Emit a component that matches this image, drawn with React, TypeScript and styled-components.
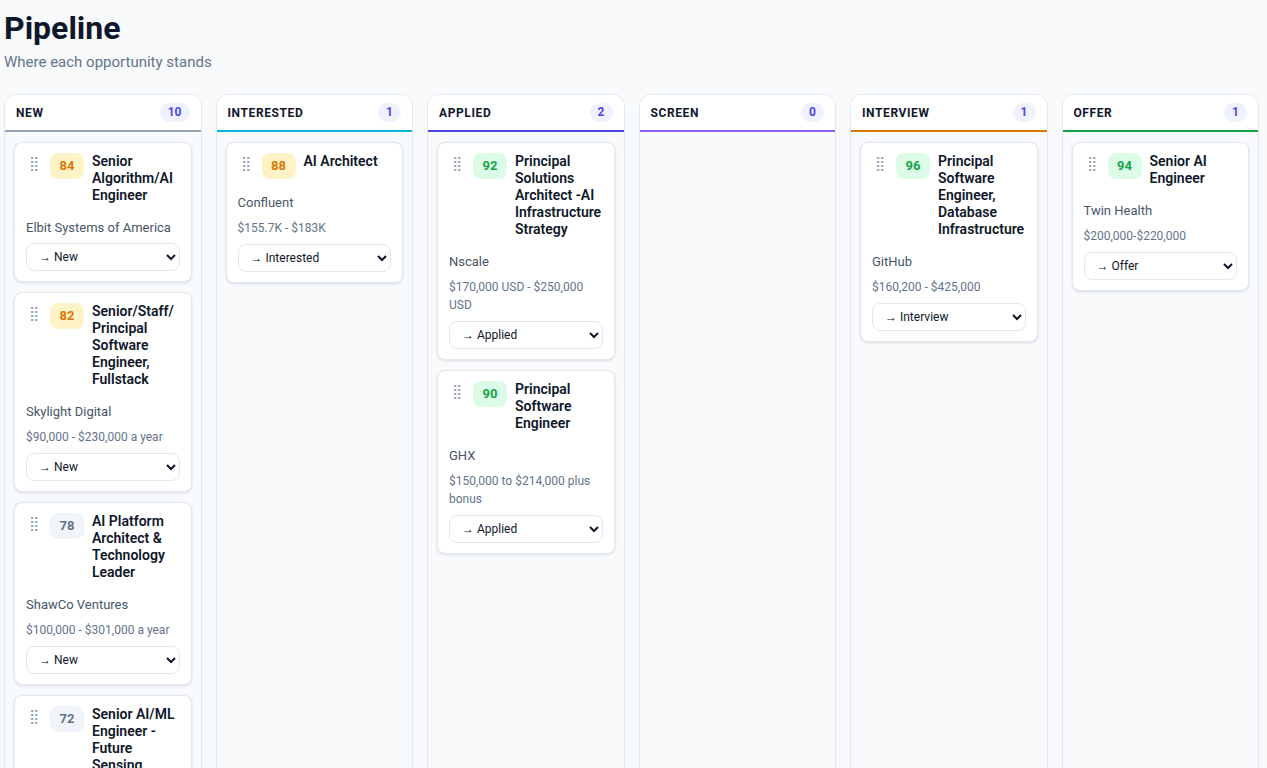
import styled, { createGlobalStyle } from "styled-components";

type Job = {
  score: number;
  title: string;
  company: string;
  salary?: string;
};

type Stage = {
  name: string;
  count: number;
  accent: string;
  jobs: Job[];
};

const stages: Stage[] = [
  {
    name: "New",
    count: 10,
    accent: "#94a3b8",
    jobs: [
      { score: 84, title: "Senior Algorithm/AI Engineer", company: "Elbit Systems of America" },
      { score: 82, title: "Senior/Staff/Principal Software Engineer, Fullstack", company: "Skylight Digital", salary: "$90,000 - $230,000 a year" },
      { score: 78, title: "AI Platform Architect & Technology Leader", company: "ShawCo Ventures", salary: "$100,000 - $301,000 a year" },
      { score: 72, title: "Senior AI/ML Engineer - Future Sensing, Perception", company: "Lumen Labs", salary: "$120,000 - $180,000" },
    ],
  },
  {
    name: "Interested",
    count: 1,
    accent: "#06b6d4",
    jobs: [{ score: 88, title: "AI Architect", company: "Confluent", salary: "$155.7K - $183K" }],
  },
  {
    name: "Applied",
    count: 2,
    accent: "#4f46e5",
    jobs: [
      { score: 92, title: "Principal Solutions Architect -AI Infrastructure Strategy", company: "Nscale", salary: "$170,000 USD - $250,000 USD" },
      { score: 90, title: "Principal Software Engineer", company: "GHX", salary: "$150,000 to $214,000 plus bonus" },
    ],
  },
  { name: "Screen", count: 0, accent: "#8b5cf6", jobs: [] },
  {
    name: "Interview",
    count: 1,
    accent: "#d97706",
    jobs: [{ score: 96, title: "Principal Software Engineer, Database Infrastructure", company: "GitHub", salary: "$160,200 - $425,000" }],
  },
  {
    name: "Offer",
    count: 1,
    accent: "#16a34a",
    jobs: [{ score: 94, title: "Senior AI Engineer", company: "Twin Health", salary: "$200,000-$220,000" }],
  },
];

function scoreTone(score: number) {
  if (score >= 90) return { bg: "#dcfce7", fg: "#16a34a" };
  if (score >= 80) return { bg: "#fef3c7", fg: "#d97706" };
  return { bg: "#f1f5f9", fg: "#64748b" };
}

function JobCard({ job, stage }: { job: Job; stage: string }) {
  const tone = scoreTone(job.score);
  return (
    <Card>
      <CardTop>
        <Grip>⣿</Grip>
        <Score $bg={tone.bg} $fg={tone.fg}>
          {job.score}
        </Score>
        <Title>{job.title}</Title>
      </CardTop>
      <Company>{job.company}</Company>
      {job.salary && <Salary>{job.salary}</Salary>}
      <StageSelect defaultValue={stage}>
        {stages.map((s) => (
          <option key={s.name} value={s.name}>
            → {s.name}
          </option>
        ))}
      </StageSelect>
    </Card>
  );
}

export default function App() {
  return (
    <Page>
      <GlobalStyle />
      <Heading>Pipeline</Heading>
      <Subheading>Where each opportunity stands</Subheading>
      <Board>
        {stages.map((stage) => (
          <Column key={stage.name}>
            <ColumnHeader $accent={stage.accent}>
              <ColumnName>{stage.name}</ColumnName>
              <Count>{stage.count}</Count>
            </ColumnHeader>
            <CardList>
              {stage.jobs.map((job) => (
                <JobCard key={job.title} job={job} stage={stage.name} />
              ))}
            </CardList>
          </Column>
        ))}
      </Board>
    </Page>
  );
}

const GlobalStyle = createGlobalStyle`
  html, body {
    margin: 0;
    height: 100%;
    overflow: hidden;
    background: #f8fafc;
    font-family: Roboto, sans-serif;
  }
  * {
    box-sizing: border-box;
  }
`;

const Page = styled.div`
  height: 768px;
  padding: 8px 8px 0 4px;
  overflow: hidden;
`;

const Heading = styled.h1`
  margin: 0;
  font-size: 32px;
  line-height: 40px;
  font-weight: 700;
  color: #0f172a;
`;

const Subheading = styled.p`
  margin: 4px 0 0;
  font-size: 15px;
  line-height: 20px;
  color: #64748b;
`;

const Board = styled.div`
  display: grid;
  grid-template-columns: repeat(6, 1fr);
  gap: 14px;
  margin-top: 22px;
  align-items: start;
`;

const Column = styled.section`
  height: 800px;
  background: #f8fafc;
  border: 1px solid #e2e8f0;
  border-radius: 12px;
  overflow: hidden;
`;

const ColumnHeader = styled.header<{ $accent: string }>`
  display: flex;
  justify-content: space-between;
  align-items: center;
  height: 37px;
  padding: 0 11px;
  background: #ffffff;
  border-bottom: 2px solid ${(p) => p.$accent};
`;

const ColumnName = styled.h2`
  margin: 0;
  font-size: 12px;
  font-weight: 700;
  letter-spacing: 0.6px;
  text-transform: uppercase;
  color: #0f172a;
`;

const Count = styled.span`
  min-width: 23px;
  padding: 2px 8px;
  border-radius: 999px;
  background: #eef2ff;
  color: #4f46e5;
  font-size: 12px;
  line-height: 15px;
  font-weight: 700;
  text-align: center;
`;

const CardList = styled.div`
  display: flex;
  flex-direction: column;
  gap: 10px;
  padding: 10px 9px;
`;

const Card = styled.article`
  display: flex;
  flex-direction: column;
  padding: 10px 11px;
  background: #ffffff;
  border: 1px solid #e2e8f0;
  border-radius: 8px;
  box-shadow: 0 1px 3px rgba(15, 23, 42, 0.12);
`;

const CardTop = styled.div`
  display: flex;
  align-items: flex-start;
  gap: 8px;
  margin-bottom: 16px;
`;

const Grip = styled.span`
  flex: none;
  width: 16px;
  font-size: 14px;
  line-height: 20px;
  text-align: center;
  color: #94a3b8;
`;

const Score = styled.span<{ $bg: string; $fg: string }>`
  flex: none;
  width: 34px;
  height: 26px;
  border-radius: 8px;
  background: ${(p) => p.$bg};
  color: ${(p) => p.$fg};
  font-size: 13px;
  font-weight: 700;
  line-height: 26px;
  text-align: center;
`;

const Title = styled.h3`
  margin: 0;
  min-width: 0;
  font-size: 14px;
  line-height: 17px;
  font-weight: 600;
  color: #0f172a;
  overflow-wrap: anywhere;
`;

const Company = styled.div`
  font-size: 13px;
  line-height: 16px;
  color: #475569;
`;

const Salary = styled.div`
  margin-top: 8px;
  font-size: 12px;
  line-height: 18px;
  color: #64748b;
`;

const StageSelect = styled.select`
  width: 100%;
  height: 28px;
  margin-top: 7px;
  padding: 0 8px;
  background: #ffffff;
  border: 1px solid #e2e8f0;
  border-radius: 8px;
  color: #0f172a;
  font-family: Roboto, sans-serif;
  font-size: 12px;
`;
